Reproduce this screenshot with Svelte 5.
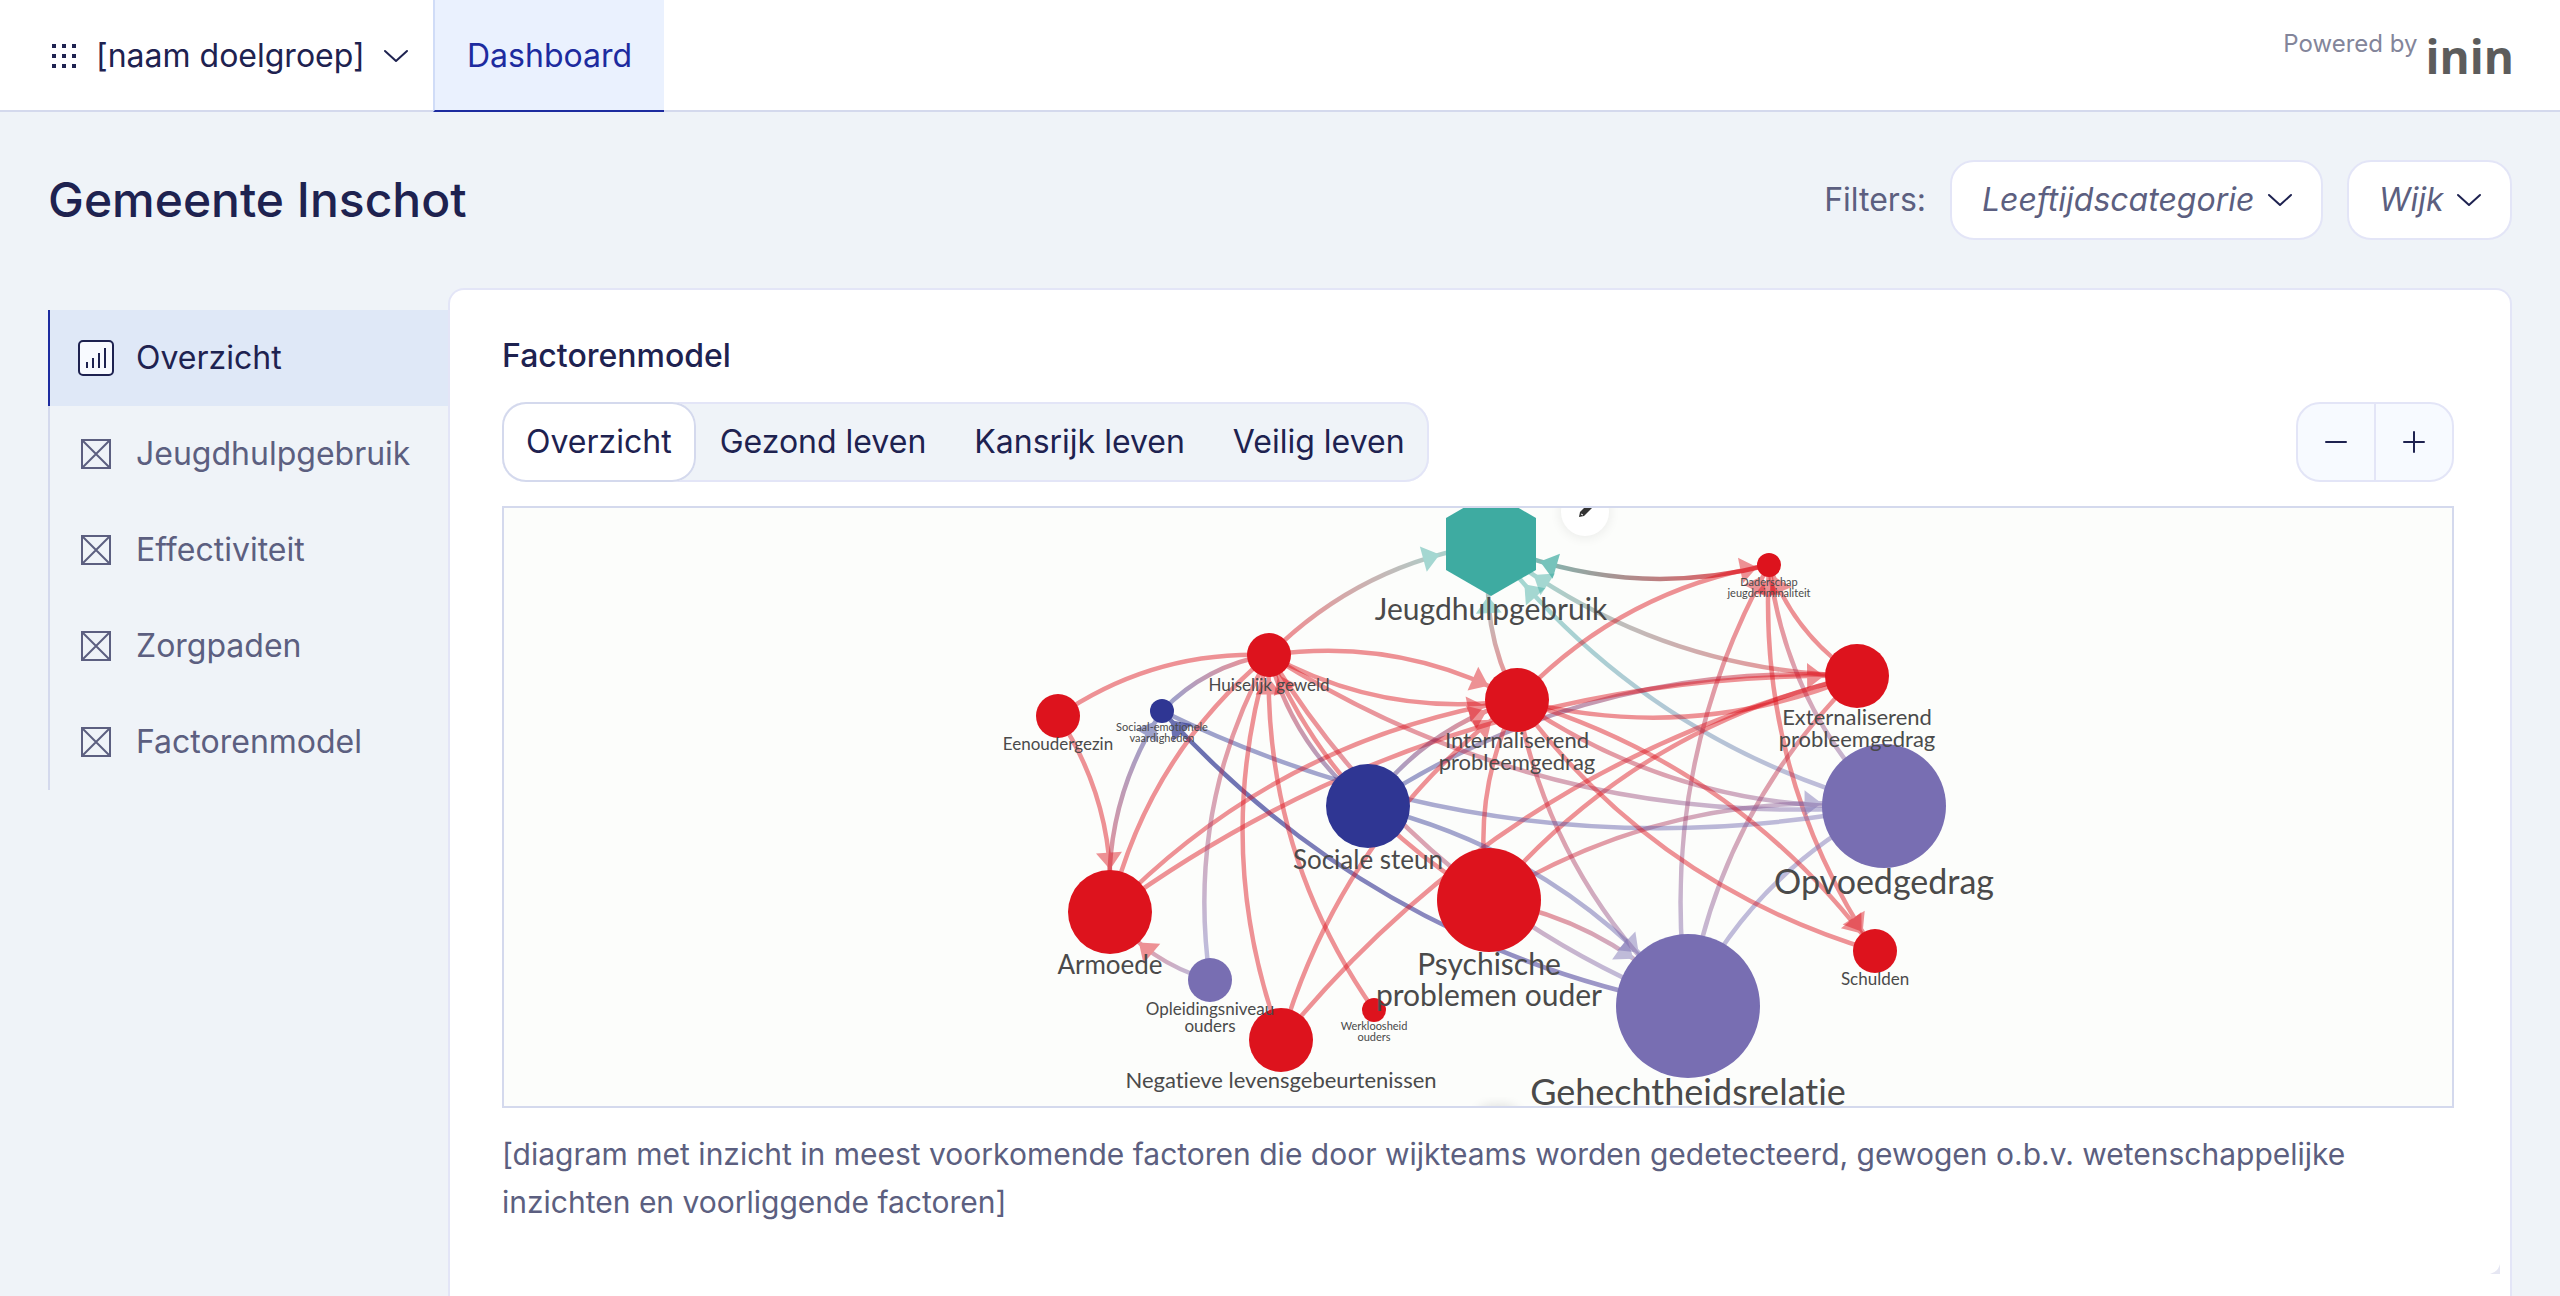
<script lang="ts">
  type Group = 'red' | 'purple' | 'blue' | 'teal';

  interface Node {
    x: number;
    y: number;
    r: number;
    group: Group;
    label: string[];
    size: number;
    baseline: number;
  }

  interface Edge {
    from: string;
    to: string;
    arrow?: 'end' | 'both';
    strong?: boolean;
  }

  const colors: Record<Group, string> = {
    red: '#dd131d',
    purple: '#786eb2',
    blue: '#2f3693',
    teal: '#3eaba1'
  };

  const menu = ['Overzicht', 'Jeugdhulpgebruik', 'Effectiviteit', 'Zorgpaden', 'Factorenmodel'];
  const tabs = ['Overzicht', 'Gezond leven', 'Kansrijk leven', 'Veilig leven'];

  let activeMenu = $state('Overzicht');
  let activeTab = $state('Overzicht');
  let zoom = $state(1);

  const nodes: Record<string, Node> = {
    jeugdhulp: { x: 1491, y: 544, r: 52, group: 'teal', label: ['Jeugdhulpgebruik'], size: 30, baseline: 620 },
    huiselijk: { x: 1269, y: 655, r: 22, group: 'red', label: ['Huiselijk geweld'], size: 17, baseline: 691 },
    eenouder: { x: 1058, y: 716, r: 22, group: 'red', label: ['Eenoudergezin'], size: 17, baseline: 750 },
    vaardig: { x: 1162, y: 711, r: 12, group: 'blue', label: ['Sociaal-emotionele', 'vaardigheden'], size: 11, baseline: 731 },
    intern: { x: 1517, y: 700, r: 32, group: 'red', label: ['Internaliserend', 'probleemgedrag'], size: 22, baseline: 748 },
    steun: { x: 1368, y: 806, r: 42, group: 'blue', label: ['Sociale steun'], size: 26, baseline: 869 },
    armoede: { x: 1110, y: 912, r: 42, group: 'red', label: ['Armoede'], size: 26, baseline: 974 },
    opleiding: { x: 1210, y: 980, r: 22, group: 'purple', label: ['Opleidingsniveau', 'ouders'], size: 17, baseline: 1015 },
    negatief: { x: 1281, y: 1040, r: 32, group: 'red', label: ['Negatieve levensgebeurtenissen'], size: 22, baseline: 1088 },
    werkloos: { x: 1374, y: 1010, r: 12, group: 'red', label: ['Werkloosheid', 'ouders'], size: 11, baseline: 1030 },
    psychisch: { x: 1489, y: 900, r: 52, group: 'red', label: ['Psychische', 'problemen ouder'], size: 30, baseline: 975 },
    gehecht: { x: 1688, y: 1006, r: 72, group: 'purple', label: ['Gehechtheidsrelatie'], size: 36, baseline: 1105 },
    opvoed: { x: 1884, y: 806, r: 62, group: 'purple', label: ['Opvoedgedrag'], size: 34, baseline: 894 },
    schulden: { x: 1875, y: 951, r: 22, group: 'red', label: ['Schulden'], size: 17, baseline: 985 },
    dader: { x: 1769, y: 565, r: 12, group: 'red', label: ['Daderschap', 'jeugdcriminaliteit'], size: 11, baseline: 586 },
    extern: { x: 1857, y: 676, r: 32, group: 'red', label: ['Externaliserend', 'probleemgedrag'], size: 22, baseline: 725 }
  };

  const edges: Edge[] = [
    { from: 'huiselijk', to: 'jeugdhulp', arrow: 'end' },
    { from: 'intern', to: 'jeugdhulp', arrow: 'end' },
    { from: 'dader', to: 'jeugdhulp', arrow: 'end', strong: true },
    { from: 'extern', to: 'jeugdhulp', arrow: 'end' },
    { from: 'opvoed', to: 'jeugdhulp', arrow: 'end' },
    { from: 'intern', to: 'dader', arrow: 'end' },
    { from: 'extern', to: 'dader', arrow: 'end' },
    { from: 'opvoed', to: 'dader' },
    { from: 'schulden', to: 'dader', arrow: 'both' },
    { from: 'gehecht', to: 'dader', arrow: 'end' },
    { from: 'gehecht', to: 'extern' },
    { from: 'gehecht', to: 'opvoed' },
    { from: 'gehecht', to: 'intern' },
    { from: 'gehecht', to: 'huiselijk' },
    { from: 'gehecht', to: 'vaardig', arrow: 'end', strong: true },
    { from: 'extern', to: 'intern' },
    { from: 'steun', to: 'extern' },
    { from: 'psychisch', to: 'extern' },
    { from: 'negatief', to: 'extern' },
    { from: 'armoede', to: 'extern', arrow: 'end' },
    { from: 'psychisch', to: 'opvoed', arrow: 'end' },
    { from: 'opvoed', to: 'huiselijk' },
    { from: 'opvoed', to: 'intern' },
    { from: 'opvoed', to: 'vaardig' },
    { from: 'intern', to: 'schulden', arrow: 'end' },
    { from: 'schulden', to: 'intern' },
    { from: 'huiselijk', to: 'intern', arrow: 'end' },
    { from: 'intern', to: 'huiselijk' },
    { from: 'armoede', to: 'intern', arrow: 'end' },
    { from: 'steun', to: 'intern', arrow: 'end' },
    { from: 'negatief', to: 'intern', arrow: 'end' },
    { from: 'psychisch', to: 'intern' },
    { from: 'psychisch', to: 'gehecht', arrow: 'end' },
    { from: 'steun', to: 'gehecht', arrow: 'end' },
    { from: 'steun', to: 'huiselijk' },
    { from: 'psychisch', to: 'huiselijk', arrow: 'end' },
    { from: 'vaardig', to: 'huiselijk' },
    { from: 'eenouder', to: 'huiselijk' },
    { from: 'armoede', to: 'huiselijk' },
    { from: 'opleiding', to: 'huiselijk' },
    { from: 'negatief', to: 'huiselijk' },
    { from: 'werkloos', to: 'huiselijk', arrow: 'end' },
    { from: 'armoede', to: 'vaardig', arrow: 'end' },
    { from: 'eenouder', to: 'armoede', arrow: 'end' },
    { from: 'opleiding', to: 'armoede', arrow: 'end' }
  ];

  // every edge bends to the left of its direction by the same ratio
  const BEND = 0.167;

  function control(a: Node, b: Node) {
    return {
      x: (a.x + b.x) / 2 + BEND * (b.y - a.y),
      y: (a.y + b.y) / 2 - BEND * (b.x - a.x)
    };
  }

  function curve(a: Node, b: Node) {
    const c = control(a, b);
    return `M${a.x} ${a.y} Q${c.x} ${c.y} ${b.x} ${b.y}`;
  }

  // triangle whose tip touches the rim of node b
  function head(a: Node, b: Node, c: { x: number; y: number }) {
    let t = 1;
    let x = b.x;
    let y = b.y;
    while (t > 0 && Math.hypot(x - b.x, y - b.y) < b.r) {
      t -= 0.002;
      const u = 1 - t;
      x = u * u * a.x + 2 * u * t * c.x + t * t * b.x;
      y = u * u * a.y + 2 * u * t * c.y + t * t * b.y;
    }
    const dx = (1 - t) * (c.x - a.x) + t * (b.x - c.x);
    const dy = (1 - t) * (c.y - a.y) + t * (b.y - c.y);
    const angle = (Math.atan2(dy, dx) * 180) / Math.PI;
    return `translate(${x} ${y}) rotate(${angle})`;
  }
</script>

<header class="topbar">
  <label class="switcher">
    <svg width="24" height="24" viewBox="0 0 24 24" fill="currentColor" aria-hidden="true">
      {#each [0, 10, 20] as y}
        {#each [0, 10, 20] as x}
          <rect {x} {y} width="4" height="4" />
        {/each}
      {/each}
    </svg>
    <select aria-label="Doelgroep">
      <option>[naam doelgroep]</option>
    </select>
    <svg class="chevron" width="26" height="14" viewBox="0 0 26 14" fill="none" aria-hidden="true">
      <path d="M2 2 L13 12 L24 2" stroke="currentColor" stroke-width="2" stroke-linecap="round" stroke-linejoin="round" />
    </svg>
  </label>
  <nav class="topnav">
    <a href="#dashboard" class="active">Dashboard</a>
  </nav>
  <div class="powered">
    <span>Powered by</span>
    <span class="brand">inin</span>
  </div>
</header>

<main class="page">
  <div class="title-row">
    <h1>Gemeente Inschot</h1>
    <div class="filters">
      <span>Filters:</span>
      {#each ['Leeftijdscategorie', 'Wijk'] as name}
        <label class="filter">
          <select aria-label={name}>
            <option>{name}</option>
          </select>
          <svg class="chevron" width="26" height="14" viewBox="0 0 26 14" fill="none" aria-hidden="true">
            <path d="M2 2 L13 12 L24 2" stroke="currentColor" stroke-width="2" stroke-linecap="round" stroke-linejoin="round" />
          </svg>
        </label>
      {/each}
    </div>
  </div>

  <div class="columns">
    <nav class="sidebar">
      {#each menu as item}
        <a
          href="#{item.toLowerCase()}"
          class:active={activeMenu === item}
          onclick={() => (activeMenu = item)}
        >
          <svg width="36" height="36" viewBox="0 0 36 36" fill="none" stroke="currentColor" stroke-width="2" aria-hidden="true">
            {#if item === 'Overzicht'}
              <rect x="1" y="1" width="34" height="34" rx="4" fill="#f8faff" />
              <path d="M9 28 V22 M15 28 V18 M21 28 V13 M27 28 V8" />
            {:else}
              <rect x="4" y="4" width="28" height="28" />
              <path d="M4 4 L32 32 M32 4 L4 32" />
            {/if}
          </svg>
          {item}
        </a>
      {/each}
    </nav>

    <section class="card">
      <h2>Factorenmodel</h2>
      <div class="toolbar">
        <div class="tabs">
          {#each tabs as tab}
            <button class:active={activeTab === tab} onclick={() => (activeTab = tab)}>{tab}</button>
          {/each}
        </div>
        <div class="zoom">
          <button aria-label="Uitzoomen" onclick={() => (zoom = Math.max(0.5, zoom - 0.1))}>
            <svg width="24" height="24" viewBox="0 0 24 24" stroke="currentColor" stroke-width="2" stroke-linecap="round">
              <path d="M2 12 H22" />
            </svg>
          </button>
          <button aria-label="Inzoomen" onclick={() => (zoom = Math.min(2, zoom + 0.1))}>
            <svg width="24" height="24" viewBox="0 0 24 24" stroke="currentColor" stroke-width="2" stroke-linecap="round">
              <path d="M2 12 H22 M12 2 V22" />
            </svg>
          </button>
        </div>
      </div>

      <div class="diagram">
        <svg viewBox="504 508 1948 598" role="img" aria-label="Factorenmodel">
          <defs>
            {#each edges as { from, to }}
              {@const a = nodes[from]}
              {@const b = nodes[to]}
              <linearGradient id="{from}-{to}" gradientUnits="userSpaceOnUse" x1={a.x} y1={a.y} x2={b.x} y2={b.y}>
                <stop offset="10%" stop-color={colors[a.group]} />
                <stop offset="90%" stop-color={colors[b.group]} />
              </linearGradient>
            {/each}
            <filter id="soft" x="-50%" y="-50%" width="200%" height="200%">
              <feGaussianBlur stdDeviation="6" />
            </filter>
          </defs>

          <g transform="translate(1478 807) scale({zoom}) translate(-1478 -807)">
            <!-- Edges -->
            {#each edges as { from, to, arrow, strong }}
              {@const a = nodes[from]}
              {@const b = nodes[to]}
              {@const c = control(a, b)}
              <g opacity={strong ? 0.7 : 0.46}>
                <path d={curve(a, b)} stroke="url(#{from}-{to})" stroke-width="4.5" fill="none" />
                {#if arrow}
                  <path d="M0 0 L-17 -13 V13 Z" fill={colors[b.group]} transform={head(a, b, c)} />
                {/if}
                {#if arrow === 'both'}
                  <path d="M0 0 L-17 -13 V13 Z" fill={colors[a.group]} transform={head(b, a, c)} />
                {/if}
              </g>
            {/each}

            <!-- Nodes -->
            {#each Object.values(nodes) as node}
              {#if node.group === 'teal'}
                <path
                  d="M0 -52 L45 -26 V26 L0 52 L-45 26 V-26 Z"
                  fill={colors.teal}
                  transform="translate({node.x} {node.y})"
                />
              {:else}
                <circle cx={node.x} cy={node.y} r={node.r} fill={colors[node.group]} />
              {/if}
            {/each}

            <!-- Labels -->
            {#each Object.values(nodes) as node}
              <text text-anchor="middle" font-size={node.size}>
                {#each node.label as line, i}
                  <tspan x={node.x} y={node.baseline + i * Math.round(node.size * 1.02)}>{line}</tspan>
                {/each}
              </text>
            {/each}
          </g>

          <!-- Edit handle -->
          <circle cx="1585" cy="513" r="25" fill="#000" opacity="0.07" filter="url(#soft)" />
          <circle cx="1585" cy="512" r="24" fill="#fff" />
          <path d="M1579 517 L1580 512 L1590 502 L1594 506 L1584 516 Z" fill="#333" />
          <path d="M1581 514 L1583 515" stroke="#fff" />
          <ellipse cx="1498" cy="1113" rx="20" ry="8" fill="#000" opacity="0.12" filter="url(#soft)" />
        </svg>
      </div>

      <p>
        [diagram met inzicht in meest voorkomende factoren die door wijkteams worden gedetecteerd, gewogen
        o.b.v. wetenschappelijke inzichten en voorliggende factoren]
      </p>
      <svg class="grip" width="10" height="10" viewBox="0 0 10 10" aria-hidden="true">
        <path d="M10 0 V10 H0 Q8 8 10 0 Z" fill="#e6e7f3" />
      </svg>
    </section>
  </div>
</main>

<style>
  :global(body) {
    background: #eff3f8;
    color: #1e2250;
    font: 32px/48px Inter, "Liberation Sans", sans-serif;
  }

  select,
  button {
    margin: 0;
    padding: 0;
    border: none;
    background: none;
    color: inherit;
    font: inherit;
    appearance: none;
    cursor: pointer;
  }

  a {
    color: inherit;
    text-decoration: none;
  }

  svg {
    flex-shrink: 0;
  }

  .topbar {
    display: flex;
    height: 110px;
    background: #fff;
    border-bottom: 2px solid #d4d9ed;
  }

  .switcher {
    position: relative;
    display: flex;
    align-items: center;
    gap: 20px;
    padding: 2px 24px 0 52px;
  }

  .switcher select {
    padding-right: 44px;
  }

  .chevron {
    position: absolute;
    right: 24px;
    pointer-events: none;
  }

  .topnav a {
    display: flex;
    align-items: center;
    height: 108px;
    padding: 2px 32px 0;
  }

  .topnav a.active {
    background: #eaf1fe;
    color: #1d2b9f;
    border-left: 2px solid #d0dcf7;
    border-bottom: 2px solid #1d2b9f;
  }

  .powered {
    display: flex;
    gap: 8px;
    margin-left: auto;
    padding: 20px 46px 0 0;
    color: #83859a;
    font-size: 24px;
  }

  .brand {
    color: #5c5c5c;
    font: 700 46px/72px "Open Sans", sans-serif;
  }

  .page {
    display: flex;
    flex-direction: column;
    min-height: calc(100vh - 112px);
    padding: 48px 48px 0;
    box-sizing: border-box;
  }

  .title-row,
  .filters,
  .toolbar {
    display: flex;
    align-items: center;
  }

  .title-row,
  .toolbar {
    justify-content: space-between;
  }

  h1 {
    margin: 0;
    font-size: 48px;
    font-weight: 500;
  }

  .filters {
    gap: 24px;
    color: #5c5f80;
  }

  .filter {
    position: relative;
    display: flex;
    align-items: center;
    border: 2px solid #e3e5f7;
    border-radius: 24px;
    background: #fff;
  }

  .filter select {
    height: 76px;
    padding: 0 66px 0 30px;
    font-style: italic;
  }

  .filter .chevron {
    right: 28px;
    color: #1e2250;
  }

  .columns {
    display: flex;
    flex: 1;
    margin-top: 48px;
  }

  .sidebar {
    width: 400px;
    flex-shrink: 0;
    padding-top: 22px;
    color: #5c5f80;
  }

  .sidebar a {
    display: flex;
    align-items: center;
    gap: 22px;
    height: 96px;
    padding-left: 28px;
    border-left: 2px solid #d4d9ed;
  }

  .sidebar a.active {
    background: #dfe8f7;
    border-color: #1d2b9f;
    color: #1e2250;
  }

  .card {
    flex: 1;
    min-width: 0;
    padding: 42px 56px 0 52px;
    border: 2px solid #e3e5f7;
    border-bottom: none;
    border-radius: 16px 16px 0 0;
    background: #fff;
  }

  h2 {
    margin: 0 0 22px;
    font-size: 32px;
    font-weight: 500;
  }

  .tabs {
    display: flex;
    border-radius: 24px;
    background: #eff3f8;
    box-shadow: inset 0 0 0 2px #e3e5f7;
  }

  .tabs button {
    height: 80px;
    padding: 0 24px;
    border-radius: 24px;
  }

  .tabs button.active {
    background: #fff;
    box-shadow: inset 0 0 0 2px #d4d9ed;
  }

  .zoom {
    display: flex;
    border: 2px solid #e3e5f7;
    border-radius: 24px;
    background: #f7faff;
  }

  .zoom button {
    display: grid;
    place-items: center;
    width: 76px;
    height: 76px;
  }

  .zoom button + button {
    border-left: 2px solid #e3e5f7;
    width: 78px;
  }

  .diagram {
    margin-top: 24px;
    border: 2px solid #d4d9ed;
    background: #fcfdfb;
  }

  .diagram svg {
    display: block;
    width: 100%;
    height: auto;
  }

  .diagram text {
    fill: #4a4a4a;
    font-family: Lato, "Open Sans", sans-serif;
    font-variant-ligatures: none;
  }

  p {
    margin: 22px 0 0;
    color: #5c5f80;
    font-size: 30px;
  }

  .grip {
    display: block;
    margin: 38px -46px 0 auto;
  }
</style>
